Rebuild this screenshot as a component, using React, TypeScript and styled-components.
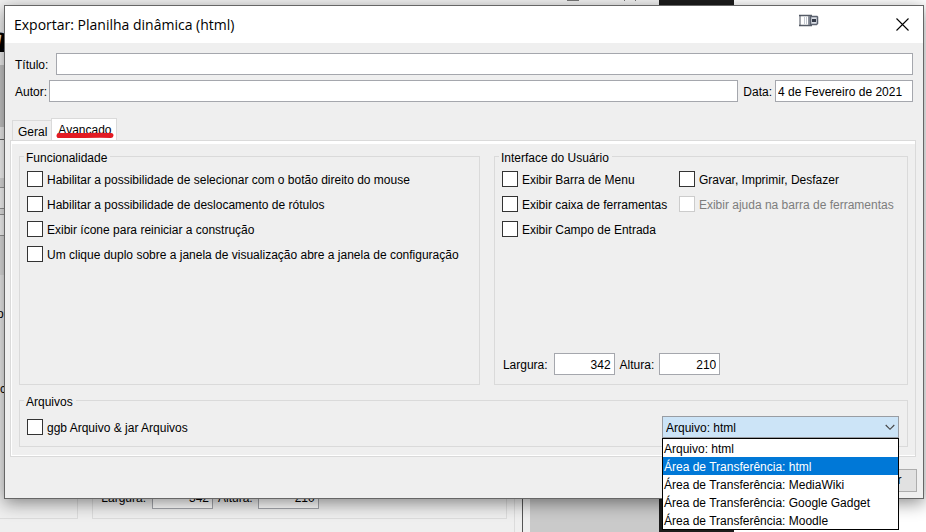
import React, { useState } from "react";
import styled, { createGlobalStyle, css } from "styled-components";

const GlobalStyle = createGlobalStyle`
  *, *::before, *::after { box-sizing: border-box; }
  body {
    margin: 0;
    background: #efefef;
    color: #000;
    font: 12px/15px "Liberation Sans", Arial, sans-serif;
  }
  input, select, button { font: inherit; color: inherit; }
`;

const Desktop = styled.div`
  display: grid;
  min-height: 100vh;
  overflow: hidden;
  & > * { grid-area: 1 / 1; min-width: 0; }
`;

/* ---------- windows lying behind the dialog ---------- */

const Backdrop = styled.div`
  display: flex;
  flex-direction: column;
  background: #fff;
`;

const BackTop = styled.div`
  display: flex;
  height: 5px;
`;

const BackMain = styled.div`
  flex: 1;
  display: flex;
`;

const BackWindow = styled.div`
  flex: 523 1 0;
  min-width: 0;
  display: flex;
  flex-direction: column;
  justify-content: space-between;
  background: #efefef;
  border-right: 1px solid #555;
`;

const BackPane = styled.div<{ $grow: number; $color: string }>`
  flex: ${(p) => p.$grow} 1 0;
  background: ${(p) => p.$color};
`;

const TopMarks = styled.svg`
  display: block;
  width: 80px;
  height: 2px;
  margin: 0 12px 0 auto;
`;

const EdgeStrip = styled.div`
  width: 4px;
  white-space: nowrap;
`;

const EdgeBlock = styled.div<{ $h: number; $color: string; $line?: string }>`
  height: ${(p) => p.$h}px;
  background: ${(p) => p.$color};
  border-bottom: 1px solid ${(p) => p.$line ?? p.$color};
`;

const EdgeHeading = styled(EdgeBlock)`
  font: italic bold 40px/24px "Liberation Serif", serif;
  text-indent: -12px;
`;

const EdgeText = styled(EdgeBlock)<{ $indent: number }>`
  line-height: 18px;
  text-indent: ${(p) => p.$indent}px;
`;

const BackGroups = styled.div`
  display: flex;
  gap: 14px;
  padding: 0 7px 13px 0;
  border-right: 1px solid #dcdcdc;
  margin-right: 7px;
`;

const BackGroup = styled.div`
  flex: 414 1 0;
  display: flex;
  align-items: center;
  height: 33px;
  padding: 0 0 9px 8px;
  border: 1px solid #dcdcdc;
  border-top: 0;
`;

const BackGroupCut = styled(BackGroup)`
  flex-grow: 79;
  padding: 0;
  border-left: 0;
`;

/* ---------- dialog ---------- */

const Dialog = styled.main`
  position: relative;
  z-index: 1;
  display: flex;
  flex-direction: column;
  margin: 5px 2px 33px 4px;
  background: #efefef;
  border: 1px solid #666;
  box-shadow: 0 4px 16px rgba(0, 0, 0, 0.45);
`;

const TitleBar = styled.header`
  display: flex;
  align-items: center;
  height: 37px;
  padding: 0 14px 0 9px;
  background: #fff;
`;

const Title = styled.h1`
  flex: 1;
  margin: 0;
  font: 14px/20px "Open Sans", "Segoe UI", sans-serif;
`;

const Mark = styled.svg`
  width: 20px;
  height: 14px;
  margin: 0 77px 8px 0;
`;

const CloseButton = styled.button`
  display: flex;
  padding: 0;
  border: 0;
  background: none;
`;

const Form = styled.section`
  display: flex;
  flex-direction: column;
  gap: 5px;
  padding: 10px 10px 16px;
`;

const FieldRow = styled.div`
  display: flex;
  align-items: center;
`;

const FieldLabel = styled.label<{ $gap: number }>`
  margin-right: ${(p) => p.$gap}px;
  padding-top: 2px;
  white-space: nowrap;
`;

const TextField = styled.input<{ $width?: number; $right?: boolean }>`
  ${(p) =>
    p.$width
      ? css`
          flex: 0 0 ${p.$width}px;
          width: ${p.$width}px;
        `
      : css`
          flex: 1;
          min-width: 0;
        `}
  height: 22px;
  padding: 1px ${(p) => (p.$right ? 3 : 2)}px 0 2px;
  margin: 0 5px 0 0;
  border: 1px solid #a5a7ad;
  border-radius: 0;
  background: #fff;
  text-align: ${(p) => (p.$right ? "right" : "left")};
  outline: none;
  &:last-child { margin-right: 0; }
`;

const Tabs = styled.div`
  display: flex;
  align-items: flex-end;
  padding-left: 7px;
`;

const Tab = styled.button<{ $active?: boolean }>`
  position: relative;
  height: ${(p) => (p.$active ? 22 : 20)}px;
  padding: ${(p) => (p.$active ? "2px 4px 0 6px" : "3px 4px 0 5px")};
  border: 1px solid #dadada;
  border-bottom: 0;
  background: ${(p) => (p.$active ? "#fff" : "#efefef")};
  ${(p) => !p.$active && css`border-right: 0;`}
`;

const Underline = styled.svg`
  position: absolute;
  left: 3px;
  top: 13px;
  width: 60px;
  height: 7px;
  z-index: 1;
`;

const Pane = styled.section`
  flex: 1;
  display: flex;
  flex-direction: column;
  gap: 6px;
  margin: 0 7px 0 5px;
  padding: 6px 7px 9px 8px;
  border: 1px solid #dadada;
  box-shadow: inset 0 3px #fff, inset 1px -1px #fff;
`;

const Groups = styled.div`
  flex: 1;
  display: flex;
  gap: 14px;
`;

const Group = styled.fieldset<{ $grow?: number }>`
  display: flex;
  flex-direction: column;
  ${(p) =>
    p.$grow &&
    css`
      flex: ${p.$grow} 1 0;
    `}
  min-width: 0;
  margin: 0;
  padding: 0;
  border: 1px solid #dadada;
`;

const Legend = styled.legend`
  margin-left: 4px;
  padding: 4px 3px 0 2px;
`;

const Checks = styled.div<{ $columns?: string }>`
  display: grid;
  grid-template-columns: ${(p) => p.$columns ?? "1fr"};
  row-gap: 9px;
  padding: 5px 7px;
`;

const CheckLabel = styled.label<{ $disabled?: boolean }>`
  display: flex;
  align-items: center;
  gap: 4px;
  height: 16px;
  white-space: nowrap;
  color: ${(p) => (p.$disabled ? "#7d7d7d" : "#000")};
`;

const CheckText = styled.span`
  padding-top: 2px;
`;

const CheckBox = styled.input`
  appearance: none;
  flex: none;
  width: 16px;
  height: 16px;
  margin: 0;
  border: 1px solid #333;
  background: #fff;
  &:checked { box-shadow: inset 0 0 0 3px #fff; background: #333; }
  &:disabled { border-color: #ccc; }
`;

const SizeRow = styled.div`
  display: flex;
  align-items: center;
  margin-top: auto;
  padding: 0 8px 9px;
`;

const FilesRow = styled.div`
  display: flex;
  align-items: center;
  justify-content: space-between;
  padding: 6px 8px 8px 7px;
`;

const Combo = styled.div`
  position: relative;
  width: 237px;
`;

const ComboSelect = styled.select`
  appearance: none;
  display: block;
  width: 100%;
  height: 22px;
  padding: 2px 24px 0 3px;
  border: 1px solid #999da3;
  border-radius: 0;
  background: #cce4f7;
  outline: none;
`;

const Chevron = styled.svg`
  position: absolute;
  right: 4px;
  top: 8px;
  width: 10px;
  height: 7px;
  pointer-events: none;
`;

const Popup = styled.ul`
  position: absolute;
  top: 100%;
  left: 0;
  right: 0;
  z-index: 2;
  margin: 0;
  padding: 0;
  list-style: none;
  border: 1px solid #000;
  background: #fff;
`;

const Option = styled.li<{ $selected: boolean }>`
  height: 18px;
  padding-left: 1px;
  line-height: 20px;
  white-space: nowrap;
  background: ${(p) => (p.$selected ? "#0078d7" : "#fff")};
  color: ${(p) => (p.$selected ? "#fff" : "#000")};
`;

const Footer = styled.footer`
  display: flex;
  justify-content: flex-end;
  padding: 12px 6px 6px;
`;

const Button = styled.button`
  width: 79px;
  height: 23px;
  padding: 0;
  border: 1px solid #adadad;
  background: #e1e1e1;
`;

const functionality = [
  "Habilitar a possibilidade de selecionar com o botão direito do mouse",
  "Habilitar a possibilidade de deslocamento de rótulos",
  "Exibir ícone para reiniciar a construção",
  "Um clique duplo sobre a janela de visualização abre a janela de configuração",
];

const interfaceOptions = [
  { text: "Exibir Barra de Menu" },
  { text: "Gravar, Imprimir, Desfazer" },
  { text: "Exibir caixa de ferramentas" },
  { text: "Exibir ajuda na barra de ferramentas", disabled: true },
  { text: "Exibir Campo de Entrada" },
];

const targets = [
  "Arquivo: html",
  "Área de Transferência: html",
  "Área de Transferência: MediaWiki",
  "Área de Transferência: Google Gadget",
  "Área de Transferência: Moodle",
];

function Check({ text, disabled }: { text: string; disabled?: boolean }) {
  return (
    <CheckLabel $disabled={disabled}>
      <CheckBox type="checkbox" disabled={disabled} />
      <CheckText>{text}</CheckText>
    </CheckLabel>
  );
}

function SizeFields({ prefix }: { prefix: string }) {
  return (
    <>
      <FieldLabel $gap={6} htmlFor={prefix + "-w"}>Largura:</FieldLabel>
      <TextField id={prefix + "-w"} $width={61} $right defaultValue="342" />
      <FieldLabel $gap={5} htmlFor={prefix + "-h"}>Altura:</FieldLabel>
      <TextField id={prefix + "-h"} $width={61} $right defaultValue="210" />
    </>
  );
}

export default function App() {
  const [target, setTarget] = useState(targets[0]);
  const [hovered, setHovered] = useState(1);

  return (
    <>
      <GlobalStyle />
      <Desktop>
        <Backdrop>
          <BackTop>
            <BackPane $grow={659} $color="#f2f2f2">
              <TopMarks viewBox="0 0 80 2" aria-hidden="true">
                <path d="M0 .5H12M57 .5h1M68 .5h1" stroke="#777" />
              </TopMarks>
            </BackPane>
            <BackPane $grow={75} $color="#1c1c1c" />
            <BackPane $grow={192} $color="#fff" />
          </BackTop>
          <BackMain>
            <BackWindow>
              <EdgeStrip>
                <EdgeBlock $h={22} $color="#f2f2f2" />
                <EdgeHeading $h={38} $color="#f2f2f2">a</EdgeHeading>
                <EdgeBlock $h={62} $color="#c8c8c8" />
                <EdgeBlock $h={13} $color="#f0f0f0" $line="#666" />
                <EdgeBlock $h={38} $color="#fafafa" />
                <EdgeBlock $h={10} $color="#e0e0e0" $line="#999" />
                <EdgeBlock $h={21} $color="#fafafa" $line="#999" />
                <EdgeBlock $h={6} $color="#e8e8e8" $line="#999" />
                <EdgeBlock $h={21} $color="#fafafa" $line="#999" />
                <EdgeBlock $h={39} $color="#e0e0e0" />
                <EdgeBlock $h={30} $color="#efefef" />
                <EdgeText $h={75} $color="#efefef" $indent={-3}>ou</EdgeText>
                <EdgeText $h={30} $color="#efefef" $indent={0}>c</EdgeText>
              </EdgeStrip>
              <BackGroups>
                <BackGroupCut />
                <BackGroup>
                  <SizeFields prefix="back" />
                </BackGroup>
              </BackGroups>
            </BackWindow>
            <BackPane $grow={7} $color="#efefef" />
            <BackPane $grow={129} $color="#cacaca" />
            <BackPane $grow={75} $color="#1c1c1c" />
            <BackPane $grow={192} $color="#fff" />
          </BackMain>
        </Backdrop>

        <Dialog>
          <TitleBar>
            <Title>Exportar: Planilha dinâmica (html)</Title>
            <Mark viewBox="0 0 20 14" fill="none" aria-hidden="true">
              <path d="M0 1.500H13M0 11.500H13" stroke="#555b66" strokeWidth="1.500" />
              <path d="M1 1V12" stroke="#4b505c" />
              <path d="M5.500 3V10M7.500 3V10" stroke="#c3c8d0" />
              <path d="M10 2V11" stroke="#8a8f9a" strokeWidth="2" />
              <path d="M11.500 2.500H18L18.500 3V9.500L17.500 10.500H11.500Z" fill="#d9dde5" stroke="#5d6370" strokeWidth="1.500" />
              <rect x="13" y="5" width="4" height="3" fill="#333947" />
            </Mark>
            <CloseButton aria-label="Fechar">
              <svg width="13" height="13" viewBox="0 0 13 13" aria-hidden="true">
                <path d="M.5.5l12 12M12.500.5l-12 12" stroke="#000" strokeWidth="1.100" />
              </svg>
            </CloseButton>
          </TitleBar>

          <Form>
            <FieldRow>
              <FieldLabel $gap={8} htmlFor="titulo">Título:</FieldLabel>
              <TextField id="titulo" />
            </FieldRow>
            <FieldRow>
              <FieldLabel $gap={2} htmlFor="autor">Autor:</FieldLabel>
              <TextField id="autor" />
              <FieldLabel $gap={3} htmlFor="data">Data:</FieldLabel>
              <TextField id="data" $width={138} defaultValue="4 de Fevereiro de 2021" />
            </FieldRow>
          </Form>

          <Tabs role="tablist">
            <Tab role="tab" aria-selected={false}>Geral</Tab>
            <Tab role="tab" aria-selected $active>
              Avançado
              <Underline viewBox="0 0 60 7" aria-hidden="true">
                <path d="M4 3.500C20 4 38 3 56 3.500" stroke="#e31b23" strokeWidth="5" strokeLinecap="round" fill="none" />
              </Underline>
            </Tab>
          </Tabs>

          <Pane role="tabpanel">
            <Groups>
              <Group $grow={461}>
                <Legend>Funcionalidade</Legend>
                <Checks>
                  {functionality.map((text) => (
                    <Check key={text} text={text} />
                  ))}
                </Checks>
              </Group>
              <Group $grow={414}>
                <Legend>Interface do Usuário</Legend>
                <Checks $columns="minmax(177px, max-content) 1fr">
                  {interfaceOptions.map((option) => (
                    <Check key={option.text} {...option} />
                  ))}
                </Checks>
                <SizeRow>
                  <SizeFields prefix="size" />
                </SizeRow>
              </Group>
            </Groups>
            <Group>
              <Legend>Arquivos</Legend>
              <FilesRow>
                <Check text="ggb Arquivo & jar Arquivos" />
                <Combo>
                  <ComboSelect
                    aria-label="Destino"
                    value={target}
                    onChange={(e) => setTarget(e.target.value)}
                  >
                    {targets.map((t) => (
                      <option key={t}>{t}</option>
                    ))}
                  </ComboSelect>
                  <Chevron viewBox="0 0 10 7" aria-hidden="true">
                    <path d="M.7 1l4.300 4.300L9.300 1" fill="none" stroke="#444" strokeWidth="1.100" />
                  </Chevron>
                  <Popup role="listbox" aria-label="Destino">
                    {targets.map((t, i) => (
                      <Option
                        key={t}
                        role="option"
                        aria-selected={i === hovered}
                        $selected={i === hovered}
                        onMouseEnter={() => setHovered(i)}
                        onClick={() => setTarget(t)}
                      >
                        {t}
                      </Option>
                    ))}
                  </Popup>
                </Combo>
              </FilesRow>
            </Group>
          </Pane>

          <Footer>
            <Button>Cancelar</Button>
          </Footer>
        </Dialog>
      </Desktop>
    </>
  );
}
